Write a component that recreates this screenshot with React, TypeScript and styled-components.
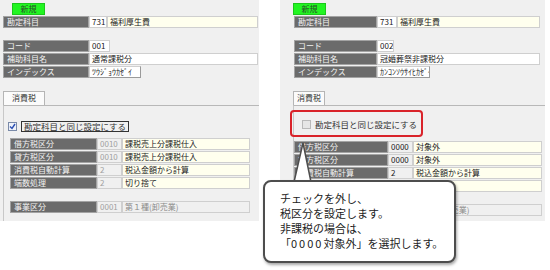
import React from "react";
import styled, { createGlobalStyle } from "styled-components";

const Global = createGlobalStyle`
  html, body { margin: 0; padding: 0; background: #ffffff; }
  body { font-family: "Noto Sans CJK JP", "Noto Sans", sans-serif; }
  #root { width: 550px; height: 270px; }
`;

const Page = styled.div`
  position: relative;
  width: 550px;
  height: 270px;
  display: flex;
  align-items: flex-start;
  gap: 21px;
`;

const Panel = styled.div<{ $w: number }>`
  width: ${(p) => p.$w}px;
  height: 221px;
  background: #f0f0f0;
  display: flex;
  flex-direction: column;
  padding-top: 3px;
  box-sizing: border-box;
`;

const NewButton = styled.div<{ $ml: number }>`
  margin-left: ${(p) => p.$ml}px;
  width: 33px;
  height: 12px;
  background: #22f522;
  border: 1px solid #1bc81b;
  box-sizing: border-box;
  font-size: 8px;
  line-height: 10px;
  color: #2a4a2a;
  text-align: center;
`;

const Rows = styled.div<{ $ml: number; $mt: number }>`
  margin-left: ${(p) => p.$ml}px;
  margin-top: ${(p) => p.$mt}px;
  display: flex;
  flex-direction: column;
  gap: 1px;
`;

const Row = styled.div`
  display: flex;
  height: 12px;
`;

const Label = styled.div<{ $w: number }>`
  width: ${(p) => p.$w}px;
  flex: none;
  background: #6b6b6b;
  border: 1px solid #a3a3a3;
  box-sizing: border-box;
  color: #f2f2f2;
  font-size: 8px;
  line-height: 10px;
  padding-left: 3px;
  white-space: nowrap;
  overflow: hidden;
`;

const Field = styled.div<{ $w?: number; $bg?: string; $color?: string; $raised?: boolean }>`
  ${(p) => (p.$w ? `width: ${p.$w}px; flex: none;` : "flex: 1;")}
  background: ${(p) => p.$bg || "#ffffff"};
  border: 1px solid #cfcfcf;
  ${(p) => (p.$raised ? "border-right-color: #9a9a9a; border-bottom-color: #9a9a9a;" : "")}
  box-sizing: border-box;
  color: ${(p) => p.$color || "#222"};
  font-size: 8px;
  line-height: 10px;
  padding-left: 2px;
  white-space: nowrap;
  overflow: hidden;
`;

const Spacer = styled.div<{ $w: number }>`
  width: ${(p) => p.$w}px;
  flex: none;
`;

const Tab = styled.div<{ $ml: number; $w: number; $mt: number }>`
  margin-left: ${(p) => p.$ml}px;
  margin-top: ${(p) => p.$mt}px;
  width: ${(p) => p.$w}px;
  height: 14px;
  background: #fbfbfb;
  border: 1px solid #b5b5b5;
  border-bottom: none;
  box-sizing: border-box;
  font-size: 8px;
  line-height: 12px;
  color: #333;
  text-align: center;
  white-space: nowrap;
`;

const TabBody = styled.div<{ $ml: number }>`
  margin-left: ${(p) => p.$ml}px;
  flex: 1;
  border-top: 1px solid #b8b8b8;
  border-left: 1px solid #c8c8c8;
  display: flex;
  flex-direction: column;
`;

const CheckRow = styled.div<{ $ml: number; $mt: number }>`
  margin-left: ${(p) => p.$ml}px;
  margin-top: ${(p) => p.$mt}px;
  display: flex;
  align-items: center;
  gap: 4px;
  height: 11px;
`;

const Highlight = styled.div`
  margin-left: -4px;
  margin-top: 4px;
  width: 133px;
  height: 27px;
  border: 2px solid #d9232a;
  border-radius: 4px;
  box-sizing: border-box;
  display: flex;
  align-items: flex-end;
  padding: 0 0 5px 10px;
`;

const Box = styled.div<{ $checked?: boolean }>`
  width: 7px;
  height: 7px;
  border: 1px solid ${(p) => (p.$checked ? "#7a8aa8" : "#b9b9b9")};
  background: ${(p) => (p.$checked ? "#eef2fa" : "#e6e6e6")};
  display: flex;
  align-items: center;
  justify-content: center;
  flex: none;
`;

const CheckLabel = styled.div<{ $framed?: boolean }>`
  font-size: 8.5px;
  line-height: 9px;
  color: #333;
  ${(p) => (p.$framed ? "border: 1px solid #333; padding: 0 2px;" : "")}
  white-space: nowrap;
`;

const Check = () => (
  <svg width="7" height="7" viewBox="0 0 7 7">
    <path d="M1 3.5 L3 5.5 L6 1" fill="none" stroke="#2b4fb3" strokeWidth="1.4" />
  </svg>
);

const Callout = styled.div`
  position: absolute;
  left: 263px;
  top: 180px;
  width: 193px;
  height: 83px;
  background: #ffffff;
  border: 2px solid #4d4d4d;
  border-radius: 8px;
  box-sizing: border-box;
  box-shadow: 1px 2px 3px rgba(0, 0, 0, 0.35);
  padding: 9px 0 0 15px;
  font-size: 11px;
  line-height: 15px;
  color: #222;
`;

const Tail = styled.svg`
  position: absolute;
  left: 290px;
  top: 141px;
  overflow: visible;
`;

const Digits = styled.span`
  letter-spacing: 2px;
`;

type TR = { label: string; code: string; value: string };

const TaxTable = ({
  rows,
  ml,
  mt,
  lw,
  cw,
  vw,
  codeColor,
}: {
  rows: TR[];
  ml: number;
  mt: number;
  lw: number;
  cw: number;
  vw: number;
  codeColor: string;
}) => (
  <Rows $ml={ml} $mt={mt}>
    {rows.map((r) => (
      <Row key={r.label}>
        <Label $w={lw}>{r.label}</Label>
        <Field $w={cw} $bg="#f0f0f0" $color={codeColor}>
          {r.code}
        </Field>
        <Field $w={vw} $bg="#ffffee">
          {r.value}
        </Field>
      </Row>
    ))}
  </Rows>
);

const Gyomu = ({ ml, mt, lw, cw, vw }: { ml: number; mt: number; lw: number; cw: number; vw: number }) => (
  <Rows $ml={ml} $mt={mt}>
    <Row>
      <Label $w={lw}>事業区分</Label>
      <Field $w={cw} $bg="#f0f0f0" $color="#a0a0a0">
        0001
      </Field>
      <Field $w={vw} $bg="#f0f0f0" $color="#8a8a8a">
        第１種(卸売業)
      </Field>
    </Row>
  </Rows>
);

export default function App() {
  return (
    <>
      <Global />
      <Page>
        <Panel $w={259}>
          <NewButton $ml={12}>新規</NewButton>
          <Rows $ml={3} $mt={1}>
            <Row>
              <Label $w={86}>勘定科目</Label>
              <Field $w={18} $bg="#ffffff">731</Field>
              <Field $bg="#ffffee">福利厚生費</Field>
              <Spacer $w={1} />
            </Row>
          </Rows>
          <Rows $ml={3} $mt={12}>
            <Row>
              <Label $w={86}>コード</Label>
              <Field $w={21}>001</Field>
            </Row>
            <Row>
              <Label $w={86}>補助科目名</Label>
              <Field>通常課税分</Field>
              <Spacer $w={1} />
            </Row>
            <Row>
              <Label $w={86}>インデックス</Label>
              <Field $w={52} $raised>ﾂｳｼﾞｮｳｶｾﾞｲ</Field>
            </Row>
          </Rows>
          <Tab $ml={3} $w={42} $mt={13}>消費税</Tab>
          <TabBody $ml={3}>
            <CheckRow $ml={4} $mt={15}>
              <Box $checked>
                <Check />
              </Box>
              <CheckLabel $framed>勘定科目と同じ設定にする</CheckLabel>
            </CheckRow>
            <TaxTable
              ml={6}
              mt={6}
              lw={87}
              cw={25}
              vw={128}
              codeColor="#a0a0a0"
              rows={[
                { label: "借方税区分", code: "0010", value: "課税売上分課税仕入" },
                { label: "貸方税区分", code: "0010", value: "課税売上分課税仕入" },
                { label: "消費税自動計算", code: "2", value: "税込金額から計算" },
                { label: "端数処理", code: "2", value: "切り捨て" },
              ]}
            />
            <Gyomu ml={6} mt={12} lw={87} cw={25} vw={128} />
          </TabBody>
        </Panel>

        <Panel $w={265}>
          <NewButton $ml={13}>新規</NewButton>
          <Rows $ml={14} $mt={1}>
            <Row>
              <Label $w={83}>勘定科目</Label>
              <Field $w={20}>731</Field>
              <Field $bg="#ffffee">福利厚生費</Field>
              <Spacer $w={5} />
            </Row>
          </Rows>
          <Rows $ml={14} $mt={12}>
            <Row>
              <Label $w={83}>コード</Label>
              <Field $w={17}>002</Field>
            </Row>
            <Row>
              <Label $w={83}>補助科目名</Label>
              <Field>冠婚葬祭非課税分</Field>
              <Spacer $w={5} />
            </Row>
            <Row>
              <Label $w={83}>インデックス</Label>
              <Field $w={53} $raised>ｶﾝｺﾝｿｳｻｲﾋｶｾﾞｲ</Field>
            </Row>
          </Rows>
          <Tab $ml={13} $w={32} $mt={13}>消費税</Tab>
          <TabBody $ml={13}>
            <Highlight>
              <CheckRow $ml={0} $mt={0}>
                <Box />
                <CheckLabel>勘定科目と同じ設定にする</CheckLabel>
              </CheckRow>
            </Highlight>
            <TaxTable
              ml={0}
              mt={4}
              lw={94}
              cw={25}
              vw={129}
              codeColor="#222"
              rows={[
                { label: "借方税区分", code: "0000", value: "対象外" },
                { label: "貸方税区分", code: "0000", value: "対象外" },
                { label: "消費税自動計算", code: "2", value: "税込金額から計算" },
                { label: "端数処理", code: "2", value: "切り捨て" },
              ]}
            />
            <Gyomu ml={0} mt={12} lw={94} cw={25} vw={129} />
          </TabBody>
        </Panel>

        <Tail width="24" height="42">
          <polygon points="13,2 4,41 21,41" fill="#ffffff" stroke="#4d4d4d" strokeWidth="1.5" strokeLinejoin="miter" />
        </Tail>
        <Callout>
          チェックを外し、
          <br />
          税区分を設定します。
          <br />
          非課税の場合は、
          <br />
          「<Digits>0000</Digits>対象外」を選択します。
        </Callout>
      </Page>
    </>
  );
}
